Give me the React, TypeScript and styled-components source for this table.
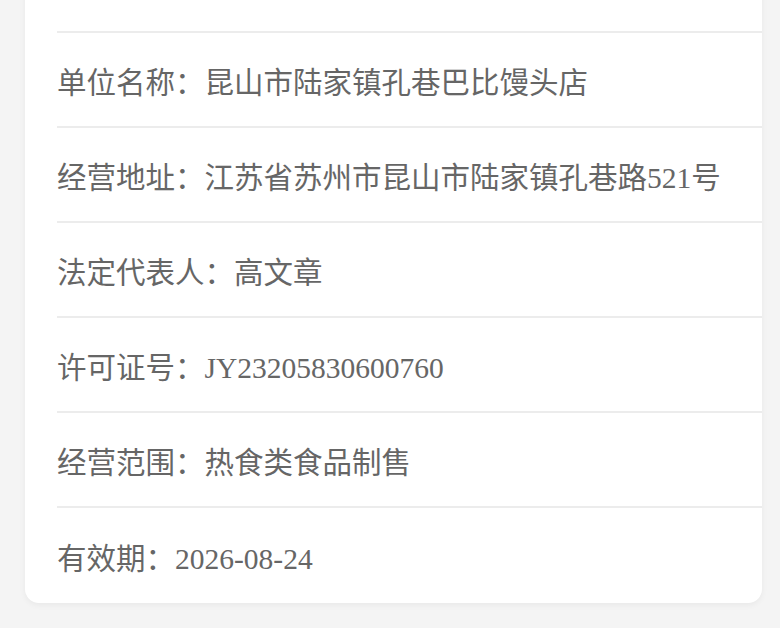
import React from "react";
import styled, { createGlobalStyle } from "styled-components";

const GlobalStyle = createGlobalStyle`
  html, body {
    margin: 0;
    padding: 0;
    background: #f4f4f4;
    overflow: hidden;
  }
`;

const items = [
  { label: "", value: "" },
  { label: "单位名称：", value: "昆山市陆家镇孔巷巴比馒头店" },
  { label: "经营地址：", value: "江苏省苏州市昆山市陆家镇孔巷路521号" },
  { label: "法定代表人：", value: "高文章" },
  { label: "许可证号：", value: "JY23205830600760" },
  { label: "经营范围：", value: "热食类食品制售" },
  { label: "有效期：", value: "2026-08-24" },
];

const App: React.FC = () => {
  return (
    <>
      <GlobalStyle />
      <Page>
        <Card>
          {items.map((item, i) => (
            <Row key={i} last={i === items.length - 1}>
              {item.label}
              {item.value}
            </Row>
          ))}
        </Card>
      </Page>
    </>
  );
};

const Page = styled.div`
  height: 628px;
  display: flex;
  flex-direction: column;
  justify-content: flex-end;
  padding: 0 18px 25px 25px;
  box-sizing: border-box;
`;

const Card = styled.div`
  flex-shrink: 0;
  background: #ffffff;
  border-radius: 0 0 14px 14px;
  box-shadow: 0 2px 6px rgba(0, 0, 0, 0.05);
`;

const Row = styled.div<{ last?: boolean }>`
  height: 95px;
  box-sizing: border-box;
  margin-left: 32px;
  padding-top: 1px;
  display: flex;
  align-items: center;
  border-bottom: ${(p) => (p.last ? "none" : "2px solid #ececec")};
  font-family: "Liberation Serif", "Noto Sans CJK SC", serif;
  font-size: 29.5px;
  color: #666666;
  white-space: nowrap;
`;

export default App;
